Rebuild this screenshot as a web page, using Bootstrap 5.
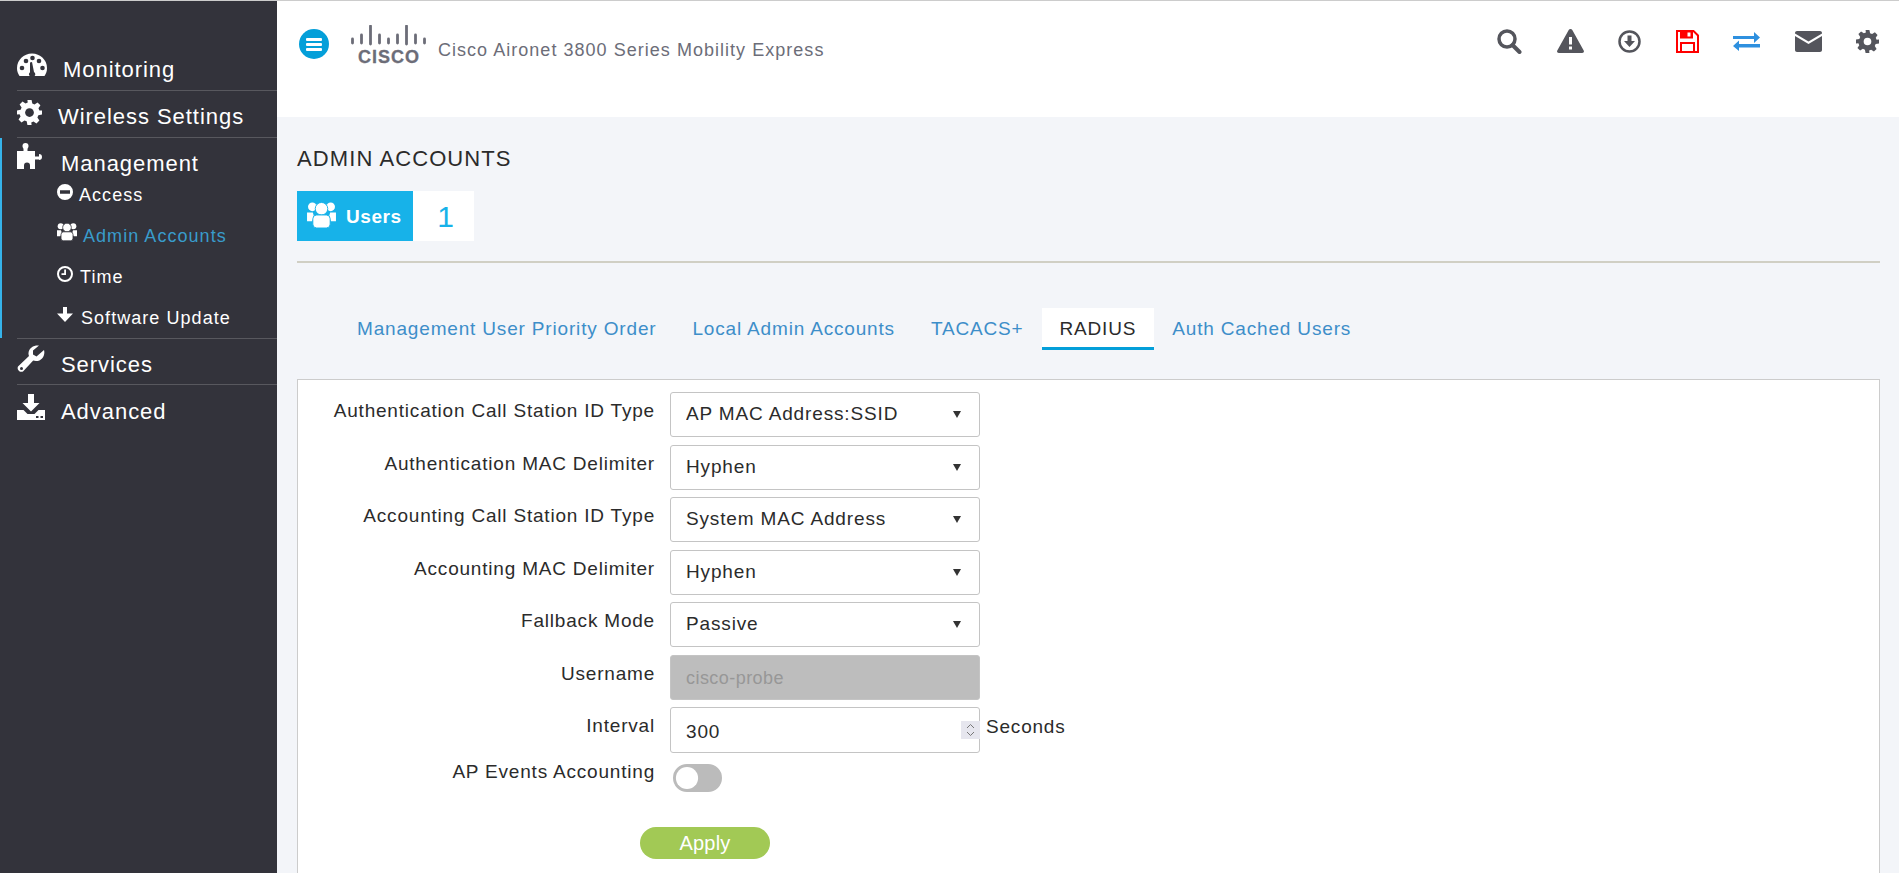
<!DOCTYPE html>
<html lang="en">

<head>
    <meta charset="UTF-8">
    <title>Cisco Aironet 3800 Series Mobility Express</title>
    <link href="https://cdn.jsdelivr.net/npm/bootstrap@5.3.3/dist/css/bootstrap.min.css" rel="stylesheet">
    <style>
        html, body { height: 100%; overflow: hidden; }
        body { font-family: "Liberation Sans", Arial, sans-serif; background: #f3f5f9; border-top: 1px solid #ccc; color: #2b2b2b; }
        .page-wrap { height: 872px; }

        /* sidebar */
        .side-menu { width: 277px; background: #33333b; padding-top: 43px; color: #fff; flex-shrink: 0; }
        .side-item { height: 47px; margin-left: 17px; border-bottom: 1px solid #58585e; font-size: 22px; letter-spacing: .95px; }
        .side-item svg { fill: #fff; flex-shrink: 0; }
        .side-item span { line-height: 1; }
        .side-group { border-left: 2px solid #35b3ea; }
        .side-group .side-item { margin-left: 15px; height: 36px; border-bottom: 0; }
        .side-sub { height: 41px; padding-left: 55px; font-size: 18px; letter-spacing: 1.05px; }
        .side-sub span { padding-top: 2px; }
        .side-sub svg { fill: #fff; flex-shrink: 0; }
        .side-sub.current span { color: #399ccb; }

        /* top bar */
        .top-bar { height: 116px; background: #fff; padding: 28px 20px 0 22px; }
        .menu-dot { width: 30px; height: 30px; border-radius: 50%; background: #049fd9; }
        .logo-svg { margin: -4px 0 0 22px; }
        .brand-text { font-size: 18px; letter-spacing: 1.03px; color: #6c6d78; margin-left: 12px; padding-top: 8px; }
        .cisco-word { font-weight: 700; font-size: 18px; letter-spacing: 1px; fill: #6c6d78; stroke: #6c6d78; stroke-width: .3px; font-family: "Liberation Sans", Arial, sans-serif; }
        .top-icons { width: 382px; height: 30px; margin-top: -3px; }
        .ico-dark { fill: #54555c; }

        /* content */
        .content-area { padding: 0 19px 0 20px; }
        .page-title { font-size: 22px; font-weight: 400; letter-spacing: 1.1px; margin: 30px 0 20px; line-height: 24px; color: #2b2b2b; }
        .users-box { height: 50px; }
        .users-tag { width: 116px; background: #17b2e9; color: #fff; font-weight: 700; font-size: 19px; letter-spacing: .55px; padding-left: 10px; }
        .users-tag svg { margin-right: 10px; margin-top: -4px; }
        .users-tag span { padding-top: 2px; }
        .users-count { width: 61px; background: #fff; color: #17b2e9; font-size: 30px; padding-left: 4px; }
        .soft-rule { border: 0; border-top: 2px solid #d0cfc4; opacity: 1; margin: 20px 0 0; }

        .radius-tabs { margin: 45px 0 0 42px; height: 42px; gap: 0; }
        .radius-tabs .nav-link { font-size: 19px; letter-spacing: .83px; color: #3d8ec9; padding: 7px 18px 0; height: 42px; border-bottom: 3px solid transparent; }
        .radius-tabs .nav-link.active { background: #fff; color: #2b2b2b; border-bottom-color: #049fd9; }

        .form-panel { background: #fff; border: 1px solid #ccc; margin-top: 29px; height: 500px; padding-top: 12px; }
        .field-row { height: 52.5px; }
        .field-label { width: 357px; text-align: right; font-size: 19px; letter-spacing: .8px; padding-top: 5px; margin: 0; color: #2b2b2b; }
        .field-box { width: 310px; margin-left: 15px; height: 45px; font-size: 19px; letter-spacing: .85px; color: #2b2b2b; border: 1px solid #c4c4c4; border-radius: 3px; padding: 0 15px; box-shadow: none; }
        select.field-box { background-image: url("data:image/svg+xml,%3csvg xmlns='http://www.w3.org/2000/svg' viewBox='0 0 8 7'%3e%3cpath fill='%23333' d='M0 0h8L4 7z'/%3e%3c/svg%3e"); background-size: 8px 7px; background-position: right 18px center; }
        .field-box:disabled { background: #bdbdbd; color: #979797; opacity: 1; font-size: 18px; letter-spacing: .45px; padding-top: 2px; }
        .number-wrap { width: 310px; margin-left: 15px; }
        .number-wrap .field-box { margin-left: 0; height: 46px; padding-top: 3px; }
        .number-wrap input::-webkit-inner-spin-button { display: none; }
        .spin-box { position: absolute; right: 0; top: 14px; width: 19px; height: 18px; background: #e6e6ee; }
        .field-unit { font-size: 19px; letter-spacing: .8px; margin-left: 6px; padding-top: 6px; }
        .toggle-wrap { margin: 0 0 0 18px; padding: 0; min-height: 0; height: 28px; }
        .toggle-wrap .form-check-input { width: 49px; height: 28px; margin: 0; background-color: #bbb; border: 2px solid #bbb; background-image: url("data:image/svg+xml,%3csvg xmlns='http://www.w3.org/2000/svg' viewBox='-4 -4 8 8'%3e%3ccircle r='3.7' fill='%23fff'/%3e%3c/svg%3e"); box-shadow: none; }
        .apply-btn { width: 130px; height: 32px; margin: 15px 0 0 342px; padding: 0; background: #a2c955; border: 0; border-radius: 16px; color: #fff; font-size: 20px; letter-spacing: .2px; line-height: 32px; display: block; }
    </style>
</head>

<body>
    <div class="d-flex page-wrap">

        <aside class="side-menu">
            <div class="side-item d-flex align-items-center">
                <svg width="30" height="24" viewBox="0 0 30 24" style="margin-top:-4px"><path d="M2.5 23C.8 20.500 0 18 0 15 0 7 6.700 .5 15 .5S30 7 30 15c0 3-.8 5.500-2.500 8z"/><g fill="#33333b"><circle cx="5" cy="15" r="2.300"/><circle cx="9" cy="8" r="2.300"/><circle cx="15.500" cy="5" r="2.300"/><circle cx="22" cy="8" r="2.300"/><circle cx="25.500" cy="15" r="2.300"/><path d="M13 9.500l2-.5 2 10a3 3 0 1 1-4 .2z"/></g></svg>
                <span class="ms-3" style="margin-top:5px">Monitoring</span>
            </div>
            <div class="side-item d-flex align-items-center">
                <svg width="25" height="25" viewBox="0 0 24 24" style="margin-top:-4px"><path d="M10 0h4l.7 3.300 2.100.9 2.900-1.900 2.800 2.800-1.900 2.900.9 2.100L24 10v4l-3.500.7-.9 2.100 1.900 2.900-2.800 2.800-2.900-1.900-2.100.9L14 24h-4l-.7-3.500-2.100-.9-2.900 1.900-2.800-2.800 1.900-2.900-.9-2.100L0 14v-4l3.500-.7.9-2.100-1.900-2.900 2.800-2.800 2.900 1.900 2.100-.9z"/><circle cx="12" cy="12" r="4.200" fill="#33333b"/></svg>
                <span style="margin-left:16px;margin-top:5px">Wireless Settings</span>
            </div>

            <div class="side-group">
                <div class="side-item d-flex align-items-center">
                    <svg width="27" height="26" viewBox="0 0 27 26" style="margin-top:-1px"><circle cx="8.500" cy="3" r="3"/><path d="M6.500 4h4v4H18v5.500h4V11a3 3 0 1 1 0 6v-.5h-4V26h-5v-3.500a3 3 0 1 0-6 0V26H0V8h6.500z"/></svg>
                    <span style="margin-left:17px;margin-top:16px">Management</span>
                </div>
                <div class="side-sub d-flex align-items-center">
                    <svg width="16" height="16" viewBox="0 0 16 16" style="margin-top:-6px"><path fill-rule="evenodd" d="M8 0a8 8 0 1 1 0 16A8 8 0 0 1 8 0zM3 6.300v3.400h10V6.300z"/></svg>
                    <span style="margin-left:6px">Access</span>
                </div>
                <div class="side-sub current d-flex align-items-center">
                    <svg width="20" height="19" viewBox="0 0 30 28" style="margin-top:-8px"><circle cx="5.500" cy="6" r="4.500"/><circle cx="24.500" cy="6" r="4.500"/><path d="M0 12h6l1.500 5L5 21H0zM30 12h-6l-1.500 5 2.500 4h5z"/><circle cx="15" cy="8" r="6.500" stroke="#33333b" stroke-width="1.200"/><rect x="6" y="14.500" width="18" height="13.500" rx="4" stroke="#33333b" stroke-width="1.200"/></svg>
                    <span style="margin-left:6px">Admin Accounts</span>
                </div>
                <div class="side-sub d-flex align-items-center">
                    <svg width="16" height="16" viewBox="0 0 16 16" style="margin-top:-6px"><path fill-rule="evenodd" d="M8 0a8 8 0 1 1 0 16A8 8 0 0 1 8 0zm0 2a6 6 0 1 0 0 12A6 6 0 0 0 8 2zM7.200 3.500h1.800V9H4.500V7.300h2.700z"/></svg>
                    <span style="margin-left:7px">Time</span>
                </div>
                <div class="side-sub d-flex align-items-center">
                    <svg width="16" height="15" viewBox="0 0 16 15" style="margin-top:-6px"><path d="M6 0h4v6.500h6L8 15 0 6.500h6z"/></svg>
                    <span style="margin-left:8px">Software Update</span>
                </div>
            </div>

            <div class="side-item d-flex align-items-center" style="border-top:1px solid #58585e;height:47px">
                <svg width="28" height="28" viewBox="0 0 28 28" style="margin-top:-6px"><path d="M27 5c1.500 5-2 11-8 11-1 0-2-.2-2.800-.5L6 26.500a3.800 3.800 0 0 1-5-5L12 11c-.4-1-.6-2-.5-3C12 2.500 17 0 22 .5l-6 5v4l3.500 2z"/><circle cx="4.500" cy="23.500" r="1.500" fill="#33333b"/></svg>
                <span style="margin-left:16px;margin-top:6px">Services</span>
            </div>
            <div class="side-item d-flex align-items-center border-0">
                <svg width="28" height="26" viewBox="0 0 28 26" style="margin-top:-4px"><path d="M11 0h6v9h5.500L14 17.500 5.500 9H11z"/><path fill-rule="evenodd" d="M0 16h6.500l4 4h7l4-4H28v10H0zm19 6v2h2.500v-2zm4.500 0v2H26v-2z"/></svg>
                <span style="margin-left:16px;margin-top:6px">Advanced</span>
            </div>
        </aside>

        <main class="flex-grow-1">
            <header class="top-bar d-flex justify-content-between align-items-start">
                <div class="d-flex align-items-start">
                    <div class="menu-dot d-flex align-items-center justify-content-center">
                        <svg width="16" height="13" viewBox="0 0 16 13" fill="#fff"><rect width="16" height="3" rx="1"/><rect y="5" width="16" height="3" rx="1"/><rect y="10" width="16" height="3" rx="1"/></svg>
                    </div>
                    <svg class="logo-svg" width="75" height="40" viewBox="0 0 75 40">
                        <g stroke="#6c6d78" stroke-width="2.800" stroke-linecap="round">
                            <path d="M2 14v4M11 10v8M20 1v18M29 10v8M38 14v4M47 10v8M56 1v18M65 10v8M74 14v4" transform="translate(-.5 0)"/>
                        </g>
                        <text class="cisco-word" x="7" y="37.500">CISCO</text>
                    </svg>
                    <div class="brand-text">Cisco Aironet 3800 Series Mobility Express</div>
                </div>

                <div class="top-icons d-flex align-items-center justify-content-between">
                    <svg width="25" height="25" viewBox="0 0 25 25"><circle cx="10" cy="10" r="8" fill="none" stroke="#54555c" stroke-width="3.500"/><path d="M15.500 16l7 7" stroke="#54555c" stroke-width="4" stroke-linecap="round"/></svg>
                    <svg width="27" height="24" viewBox="0 0 27 24"><path class="ico-dark" fill-rule="evenodd" d="M13.500 0c.8 0 1.400.4 1.800 1.100l11.400 20.300c.7 1.200-.1 2.600-1.500 2.600H1.800C.4 24-.4 22.600.3 21.400L11.700 1.100C12.100.4 12.700 0 13.500 0zM12 8v7.500h3V8zm0 9.500V20.500h3v-3z"/></svg>
                    <svg width="23" height="23" viewBox="0 0 23 23"><circle cx="11.500" cy="11.500" r="10" fill="none" stroke="#54555c" stroke-width="2.500"/><path class="ico-dark" d="M9.500 5.500h4v5.500h3.500l-5.500 6-5.500-6h3.500z"/></svg>
                    <svg width="23" height="23" viewBox="0 0 23 23"><path fill="none" stroke="#f00" stroke-width="2" d="M1 1h16.500L22 5.500V22H1z"/><path fill="#f00" d="M4 1h13v7.500H4zM4 12h15v10h-2v-8H6v8H4z"/><rect x="11.500" y="2.500" width="3" height="4" fill="#fff"/></svg>
                    <svg width="27" height="19" viewBox="0 0 27 19" fill="#2e90df"><path d="M0 4h21V0l6 5.500-6 5.500V7H0zM27 12H6V8.500L0 14l6 5v-3.500h21z"/></svg>
                    <svg width="27" height="21" viewBox="0 0 27 21"><path class="ico-dark" d="M2 0h23c1.100 0 2 .9 2 2v.5L13.500 10.500 0 2.500V2C0 .9.900 0 2 0zM0 5l13.500 8L27 5v14c0 1.100-.9 2-2 2H2c-1.100 0-2-.9-2-2z"/></svg>
                    <svg width="23" height="23" viewBox="0 0 24 24"><path class="ico-dark" fill-rule="evenodd" d="M10 0h4l.7 3.300 2.100.9 2.900-1.900 2.800 2.800-1.900 2.900.9 2.100L24 10v4l-3.500.7-.9 2.100 1.900 2.900-2.800 2.800-2.900-1.900-2.100.9L14 24h-4l-.7-3.500-2.100-.9-2.900 1.900-2.800-2.800 1.900-2.900-.9-2.100L0 14v-4l3.500-.7.900-2.100-1.900-2.900 2.800-2.800 2.900 1.900 2.100-.9zM12 8a4 4 0 1 0 0 8 4 4 0 0 0 0-8z"/></svg>
                </div>
            </header>

            <div class="content-area">
                <h1 class="page-title">ADMIN ACCOUNTS</h1>
                <div class="users-box d-flex">
                    <div class="users-tag d-flex align-items-center">
                        <svg width="29" height="27" viewBox="0 0 30 28" fill="#fff"><circle cx="5.500" cy="6" r="4.500"/><circle cx="24.500" cy="6" r="4.500"/><path d="M0 12h6l1.500 5L5 21H0zM30 12h-6l-1.500 5 2.500 4h5z"/><circle cx="15" cy="8" r="6.500" stroke="#17b2e9" stroke-width="1"/><rect x="6" y="14.500" width="18" height="13.500" rx="4" stroke="#17b2e9" stroke-width="1"/></svg>
                        <span>Users</span>
                    </div>
                    <div class="users-count d-flex align-items-center justify-content-center">1</div>
                </div>
                <hr class="soft-rule">

                <ul class="nav radius-tabs">
                    <li class="nav-item"><a class="nav-link" href="#">Management User Priority Order</a></li>
                    <li class="nav-item"><a class="nav-link" href="#">Local Admin Accounts</a></li>
                    <li class="nav-item"><a class="nav-link" href="#">TACACS+</a></li>
                    <li class="nav-item"><a class="nav-link active" href="#">RADIUS</a></li>
                    <li class="nav-item"><a class="nav-link" href="#">Auth Cached Users</a></li>
                </ul>

                <form class="form-panel">
                    <div class="field-row d-flex">
                        <label class="field-label">Authentication Call Station ID Type</label>
                        <select class="form-select field-box"><option>AP MAC Address:SSID</option></select>
                    </div>
                    <div class="field-row d-flex">
                        <label class="field-label">Authentication MAC Delimiter</label>
                        <select class="form-select field-box"><option>Hyphen</option></select>
                    </div>
                    <div class="field-row d-flex">
                        <label class="field-label">Accounting Call Station ID Type</label>
                        <select class="form-select field-box"><option>System MAC Address</option></select>
                    </div>
                    <div class="field-row d-flex">
                        <label class="field-label">Accounting MAC Delimiter</label>
                        <select class="form-select field-box"><option>Hyphen</option></select>
                    </div>
                    <div class="field-row d-flex">
                        <label class="field-label">Fallback Mode</label>
                        <select class="form-select field-box"><option>Passive</option></select>
                    </div>
                    <div class="field-row d-flex">
                        <label class="field-label">Username</label>
                        <input class="form-control field-box" value="cisco-probe" disabled>
                    </div>
                    <div class="field-row d-flex">
                        <label class="field-label">Interval</label>
                        <div class="number-wrap position-relative">
                            <input type="number" class="form-control field-box" value="300">
                            <span class="spin-box d-flex align-items-center justify-content-center">
                                <svg width="9" height="14" viewBox="0 0 9 14" fill="none" stroke="#777" stroke-width="1"><path d="M1 5l3.500-3.500L8 5M1 9l3.500 3.500L8 9"/></svg>
                            </span>
                        </div>
                        <span class="field-unit">Seconds</span>
                    </div>
                    <div class="field-row d-flex" style="padding-top:4px">
                        <label class="field-label" style="padding-top:0;margin-top:-6px">AP Events Accounting</label>
                        <div class="form-check form-switch toggle-wrap"><input class="form-check-input" type="checkbox" role="switch"></div>
                    </div>
                    <button type="button" class="btn apply-btn">Apply</button>
                </form>
            </div>
        </main>
    </div>

    <script src="https://cdn.jsdelivr.net/npm/bootstrap@5.3.3/dist/js/bootstrap.bundle.min.js"></script>
</body>

</html>
